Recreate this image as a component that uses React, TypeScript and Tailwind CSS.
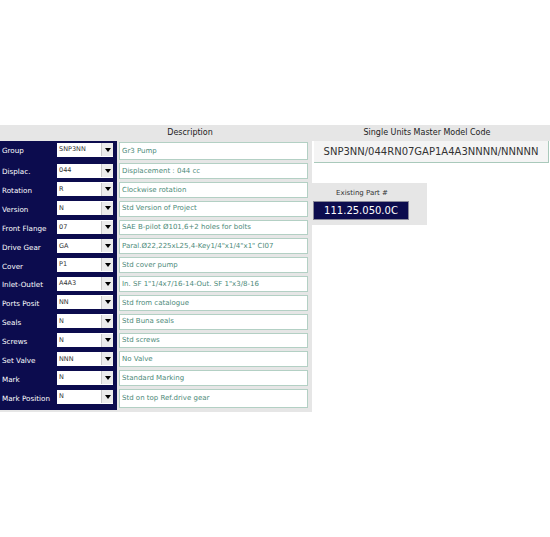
type Field = { label: string; value: string; desc: string };

const FIELDS: Field[] = [
  { label: "Group", value: "SNP3NN", desc: "Gr3 Pump" },
  { label: "Displac.", value: "044", desc: "Displacement :  044 cc" },
  { label: "Rotation", value: "R", desc: "Clockwise rotation" },
  { label: "Version", value: "N", desc: "Std Version of Project" },
  { label: "Front Flange", value: "07", desc: "SAE B-pilot Ø101,6+2 holes for bolts" },
  { label: "Drive Gear", value: "GA", desc: "Paral.Ø22,225xL25,4-Key1/4\"x1/4\"x1\" CI07" },
  { label: "Cover", value: "P1", desc: "Std cover pump" },
  { label: "Inlet-Outlet", value: "A4A3", desc: "In. SF 1\"1/4x7/16-14-Out. SF 1\"x3/8-16" },
  { label: "Ports Posit", value: "NN", desc: "Std from catalogue" },
  { label: "Seals", value: "N", desc: "Std Buna seals" },
  { label: "Screws", value: "N", desc: "Std screws" },
  { label: "Set Valve", value: "NNN", desc: "No Valve" },
  { label: "Mark", value: "N", desc: "Standard Marking" },
  { label: "Mark Position", value: "N", desc: "Std on top Ref.drive gear" },
];

function Select({ value }: { value: string }) {
  return (
    <div className="flex h-[14px] w-[56px] items-center bg-white">
      <span className="flex-1 truncate pl-[2px] pt-[1px] text-[6.5px] text-[#333]">{value}</span>
      <span className="flex h-[13px] w-[12px] items-center justify-center border-l border-[#c8c8c8] bg-[#ececec]">
        <span className="h-0 w-0 border-x-[3.5px] border-t-[4px] border-x-transparent border-t-black" />
      </span>
    </div>
  );
}

function Row({ field, index }: { field: Field; index: number }) {
  // first and last rows are a bit taller than the rest
  const height =
    index === 0 ? "h-[21px]" : index === FIELDS.length - 1 ? "h-[22px]" : "h-[18.85px]";
  return (
    <div className={`flex ${height}`}>
      <div className="flex w-[117px] items-start bg-[#0c0c4e] pt-[1.5px]">
        <span className="flex h-[14px] w-[57px] items-center pl-[2px] pt-[3px] text-[7.2px] leading-none text-white">
          {field.label}
        </span>
        <Select value={field.value} />
      </div>
      <div className="ml-[2px] w-[189px] pt-[1px] pb-[2px]">
        <div className="flex h-full items-center border border-[#b3d0c4] bg-white pl-[2px] text-[7px] text-[#4d8a79]">
          {field.desc}
        </div>
      </div>
    </div>
  );
}

export default function App() {
  return (
    <div className="h-[537px] w-[550px] bg-white pt-[125px] font-['DejaVu_Sans',Verdana,sans-serif]">
      <div className="flex">
        <div className="w-[312px] bg-[#e6e6e6] pb-[2px]">
          <div className="h-[16px] pl-[68px] text-center text-[8px] leading-[16px] text-[#222]">Description</div>
          {FIELDS.map((f, i) => (
            <Row key={f.label} field={f} index={i} />
          ))}
        </div>

        <div className="flex-1">
          <div className="h-[16px] bg-[#e6e6e6] pr-[8px] text-center text-[8px] leading-[16px] text-[#222]">
            Single Units Master Model Code
          </div>
          <div className="ml-[2px] mr-[1px] flex h-[22px] items-center justify-center border-r border-b border-[#a9c9bb] bg-[#f4f4f4] text-[10px] text-[#333]">
            SNP3NN/044RN07GAP1A4A3NNNN/NNNNN
          </div>
          <div className="mt-[20px] flex h-[42px] w-[115px] flex-col bg-[#e6e6e6] pl-[1px] pt-[6px]">
            <div className="w-[96px] pl-[2px] text-center text-[7px] leading-[9px] text-[#333]">Existing Part #</div>
            <div className="mt-[3px] flex h-[19px] w-[96px] items-center justify-center border border-[#8a8a9a] bg-[#0c0c4e] text-[10px] text-white">
              111.25.050.0C
            </div>
          </div>
        </div>
      </div>
    </div>
  );
}
